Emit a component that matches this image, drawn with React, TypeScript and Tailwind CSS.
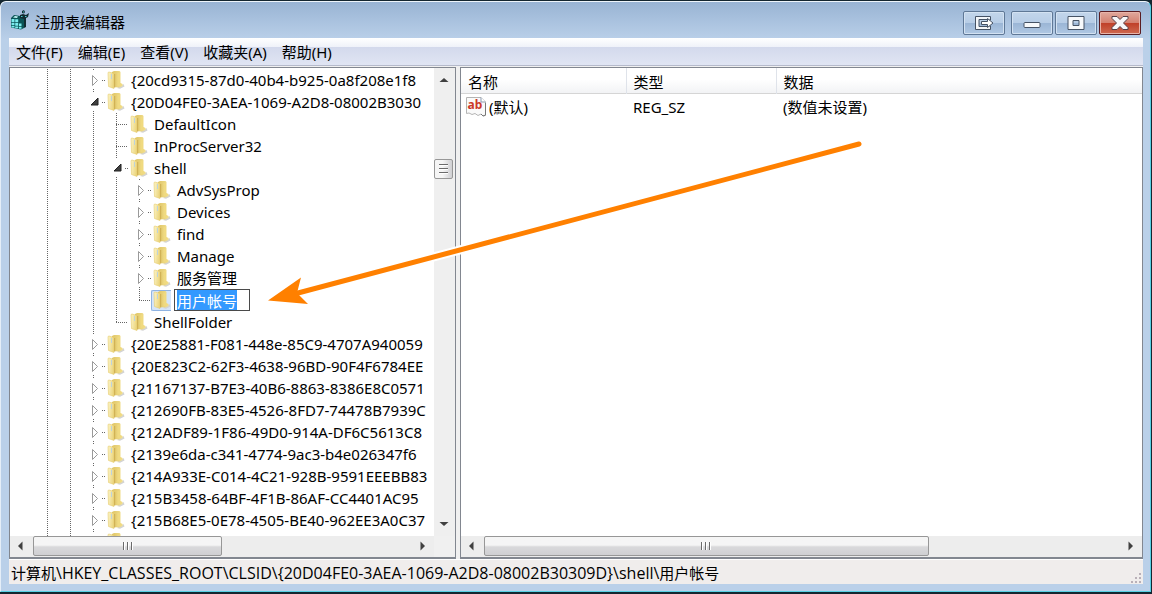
import { useEffect, useRef } from "react";
import type { ReactNode } from "react";

type Toggle = "open" | "closed" | "leaf";

interface TreeItem {
  label: string;
  depth: number;
  toggle: Toggle;
  last?: boolean;
  editing?: boolean;
}

const items: TreeItem[] = [
  { label: "{20cd9315-87d0-40b4-b925-0a8f208e1f8", depth: 2, toggle: "closed" },
  { label: "{20D04FE0-3AEA-1069-A2D8-08002B3030", depth: 2, toggle: "open" },
  { label: "DefaultIcon", depth: 3, toggle: "leaf" },
  { label: "InProcServer32", depth: 3, toggle: "leaf" },
  { label: "shell", depth: 3, toggle: "open" },
  { label: "AdvSysProp", depth: 4, toggle: "closed" },
  { label: "Devices", depth: 4, toggle: "closed" },
  { label: "find", depth: 4, toggle: "closed" },
  { label: "Manage", depth: 4, toggle: "closed" },
  { label: "服务管理", depth: 4, toggle: "closed" },
  { label: "用户帐号", depth: 4, toggle: "leaf", last: true, editing: true },
  { label: "ShellFolder", depth: 3, toggle: "leaf", last: true },
  { label: "{20E25881-F081-448e-85C9-4707A940059", depth: 2, toggle: "closed" },
  { label: "{20E823C2-62F3-4638-96BD-90F4F6784EE", depth: 2, toggle: "closed" },
  { label: "{21167137-B7E3-40B6-8863-8386E8C0571", depth: 2, toggle: "closed" },
  { label: "{212690FB-83E5-4526-8FD7-74478B7939C", depth: 2, toggle: "closed" },
  { label: "{212ADF89-1F86-49D0-914A-DF6C5613C8", depth: 2, toggle: "closed" },
  { label: "{2139e6da-c341-4774-9ac3-b4e026347f6", depth: 2, toggle: "closed" },
  { label: "{214A933E-C014-4C21-928B-9591EEEBB83", depth: 2, toggle: "closed" },
  { label: "{215B3458-64BF-4F1B-86AF-CC4401AC95", depth: 2, toggle: "closed" },
  { label: "{215B68E5-0E78-4505-BE40-962EE3A0C37", depth: 2, toggle: "closed" },
  { label: "", depth: 2, toggle: "closed" },
];

function Guide() {
  return (
    <svg className="h-[22px] w-[23px] shrink-0" viewBox="0 0 23 22" aria-hidden="true">
      <path d="M11.5 0V22" stroke="#666" strokeDasharray="1 1" />
    </svg>
  );
}

function Branch({ toggle, last }: { toggle: Toggle; last?: boolean }) {
  if (toggle === "leaf") {
    return (
      <svg className="h-[22px] w-[23px] shrink-0" viewBox="0 0 23 22" aria-hidden="true">
        <path d={last ? "M11.5 0V11" : "M11.5 0V22"} stroke="#666" strokeDasharray="1 1" />
        <path d="M11 11.5H23" stroke="#666" strokeDasharray="1 1" />
      </svg>
    );
  }
  return (
    <svg className="h-[22px] w-[23px] shrink-0" viewBox="0 0 23 22" aria-hidden="true">
      <path d="M11.5 0V1M11.5 20V21" stroke="#666" />
      <path d="M20 11.5H23" stroke="#666" strokeDasharray="1 1" />
      {toggle === "open" ? (
        <path d="M16 7V14H9Z" fill="#404040" stroke="#222" strokeLinejoin="round" />
      ) : (
        <path d="M10.5 6.5L15.5 11.5L10.5 16.5Z" fill="#fff" stroke="#9a9a9a" strokeLinejoin="round" />
      )}
    </svg>
  );
}

function Folder() {
  return (
    <svg className="h-[20px] w-[18px] shrink-0" viewBox="0 0 18 20" aria-hidden="true">
      <defs>
        <linearGradient id="folderFront" x1="0" x2="1" y1="0" y2="0.3">
          <stop offset="0" stopColor="#fcf5c8" />
          <stop offset="1" stopColor="#ecd680" />
        </linearGradient>
        <linearGradient id="folderBack" x1="0" x2="1" y1="0" y2="0">
          <stop offset="0" stopColor="#dfc566" />
          <stop offset="1" stopColor="#f3e08f" />
        </linearGradient>
      </defs>
      <path d="M10 18L16.5 14L17.5 16.5L13 18.8Z" fill="#d3d3d3" />
      <path d="M5 2L7 1H12.5L13.5 2V13L15.5 14V16L12 17.5L5 17Z" fill="url(#folderBack)" />
      <path d="M10.5 3H13V13L15 14.5L10.5 16.5Z" fill="#f0da80" />
      <path d="M1 2.5L2 2L7 3.5V18.5L1.5 16.5Z" fill="url(#folderFront)" stroke="#e6cb6c" strokeWidth=".6" />
      <path d="M7.7 4V17.5" stroke="#c9a94c" strokeWidth=".9" />
      <path d="M4.5 4V9" stroke="#bdd3dc" strokeWidth="1" />
    </svg>
  );
}

function NameEditor({ value }: { value: string }) {
  const ref = useRef<HTMLInputElement>(null);
  useEffect(() => {
    ref.current?.focus({ preventScroll: true });
    ref.current?.select();
  }, []);
  return (
    <input
      ref={ref}
      aria-label="名称"
      defaultValue={value}
      className="ml-[3px] h-[22px] w-[76px] border border-[#4a4a4a] bg-white px-0.5 text-[15px] leading-5 text-black outline-none selection:bg-[#3399ff] selection:text-white"
    />
  );
}

function TreeRow({ item }: { item: TreeItem }) {
  return (
    <li role="treeitem" aria-level={item.depth + 1} className="flex h-[22px] items-center whitespace-nowrap">
      {Array.from({ length: item.depth }, (_, i) => (
        <Guide key={i} />
      ))}
      <Branch toggle={item.toggle} last={item.last} />
      {item.editing ? (
        <>
          <span className="flex h-[21px] w-5 shrink-0 items-center rounded-l-[2px] border border-r-0 border-[#8fb3e2] bg-[#d5e5f9] pl-px">
            <Folder />
          </span>
          <NameEditor value={item.label} />
        </>
      ) : (
        <>
          <span className="ml-0.5 flex">
            <Folder />
          </span>
          <span className="ml-1.5">{item.label}</span>
        </>
      )}
    </li>
  );
}

function ArrowButton({ label, d, className }: { label: string; d: string; className: string }) {
  return (
    <button type="button" aria-label={label} className={`flex shrink-0 items-center justify-center ${className}`}>
      <svg className="size-[10px]" viewBox="0 0 10 10" aria-hidden="true">
        <path d={d} fill="#404040" />
      </svg>
    </button>
  );
}

function HorizontalScroll({ thumb, label }: { thumb: string; label: string }) {
  return (
    <div aria-label={label} className="flex h-[21px] min-w-0 flex-1 items-start bg-[#ededed]">
      <ArrowButton label="向左滚动" d="M6.5 0.5V9.5L2 5Z" className="h-5 w-[23px] pr-0.5" />
      <div className="flex min-w-0 flex-1">
        <div className={`flex h-5 items-center justify-center gap-0.5 rounded-[2px] border border-[#979797] bg-linear-to-b from-[#f5f5f5] from-45% via-[#d9d9db] via-55% to-[#cfcfd2] ${thumb}`}>
          <i className="h-2 w-0.5 border-r border-white bg-[#6b6b6b]" />
          <i className="h-2 w-0.5 border-r border-white bg-[#6b6b6b]" />
          <i className="h-2 w-0.5 border-r border-white bg-[#6b6b6b]" />
        </div>
      </div>
      <ArrowButton label="向右滚动" d="M2.5 0.5V9.5L7 5Z" className="h-5 w-[23px]" />
    </div>
  );
}

function VerticalScroll() {
  return (
    <div className="flex w-[21px] shrink-0 flex-col items-center bg-[#efefef] pr-0.5">
      <ArrowButton label="向上滚动" d="M0.5 7H9.5L5 3Z" className="h-6 w-full" />
      <div className="flex flex-1 flex-col items-center pt-[67px]">
        <div className="flex h-5 w-[19px] flex-col items-center justify-center gap-0.5 rounded-[2px] border border-[#979797] bg-linear-to-r from-[#f5f5f5] from-45% to-[#cfcfd2]">
          <i className="h-0.5 w-[9px] border-b border-white bg-[#6b6b6b]" />
          <i className="h-0.5 w-[9px] border-b border-white bg-[#6b6b6b]" />
          <i className="h-0.5 w-[9px] border-b border-white bg-[#6b6b6b]" />
        </div>
      </div>
      <ArrowButton label="向下滚动" d="M0.5 3H9.5L5 7Z" className="h-6 w-full" />
    </div>
  );
}

function CaptionButton({ label, danger, children }: { label: string; danger?: boolean; children: ReactNode }) {
  const tone = danger
    ? "border-[#5a1d22] [background-image:linear-gradient(#e0a99d,#d4806f_50%,#bf3f28_50%,#cf6a50)] shadow-[inset_0_0_0_1px_#e8b4a9]"
    : "border-[#5f7896] [background-image:linear-gradient(#c3d6eb,#b7cde6_50%,#9ab5d5_50%,#b0c8e3)] shadow-[inset_0_0_0_1px_#d3e2f2]";
  return (
    <button
      type="button"
      aria-label={label}
      className={`flex h-6 w-[42px] items-center justify-center rounded-[2px] border ${tone}`}
    >
      {children}
    </button>
  );
}

function RegistryIcon() {
  return (
    <svg className="h-5 w-5 shrink-0" viewBox="0 0 20 20" aria-hidden="true">
      <path d="M1 8L4 5L10 6L14 8V18L11 19.5L1 17.5Z" fill="#0a5557" />
      <path d="M1.5 9H4.5V12H1.5ZM5.2 9.3H8.2V12.3H5.2ZM1.5 12.7H4.5V15.2H1.5ZM5.2 13H8.2V15.8H5.2ZM9 13.5H11.5V16H9ZM1.5 16H4.5V17.5H1.5ZM5.2 16.5H8.2V18.2H5.2ZM9 16.8H11.5V18.7H9Z" fill="#7cecee" />
      <path d="M3 7.5L5 6L8 6.5L7 8Z" fill="#c8fafa" />
      <path d="M12 1L14 0L15 2L14 3.5L12 3ZM10 5L13 4L16 5L19 3L18 7L16 8V17L14 18V9L10 8Z" fill="#102c30" />
      <path d="M13 1.5H14V2.5H13ZM11 6H12.5V7H11ZM15 6H16.5V7H15Z" fill="#48c8cc" />
    </svg>
  );
}

function StringValueIcon() {
  return (
    <svg className="h-5 w-5 shrink-0" viewBox="0 0 20 20" aria-hidden="true">
      <path d="M.5 .5H15L19.5 5V18.5L17 19L15 17L12 18.5L9 16.5L6 17.5L3 16L.5 16.5Z" fill="#fafafa" stroke="#b4b4b4" />
      <path d="M15 .5V5H19.5" fill="#fff" stroke="#8b9bb0" />
      <path d="M19.5 6V18L17 19L15 17" fill="none" stroke="#777" />
      <text x="1.5" y="12" fontSize="12" fontWeight="700" fontFamily="Noto Sans, sans-serif" fill="#cc3a28">ab</text>
    </svg>
  );
}

const menus = ["文件(F)", "编辑(E)", "查看(V)", "收藏夹(A)", "帮助(H)"];

export default function App() {
  return (
    <div className="h-screen bg-[#142630] pt-px pr-px pb-0.5 font-['Noto_Sans','Noto_Sans_CJK_SC',sans-serif] text-[15px] leading-[22px] text-black select-none">
      <div className="relative flex h-full flex-col rounded-t-md border border-t-[#eef5fb] border-r-[#57cfe3] border-b-[#57cfe3] border-l-[#e5eef8] bg-[#bad0e9] bg-linear-to-b from-[#99b4d4] from-0% to-[#bad0e9] to-[38px]">
        <header className="flex h-9 shrink-0 items-center pr-[9px] pl-[9px]">
          <RegistryIcon />
          <h1 className="ml-[5px] flex-1 pt-1">注册表编辑器</h1>
          <div className="flex pt-1.5 pb-px">
            <CaptionButton label="移动到其他显示器">
              <svg className="h-4 w-5" viewBox="0 0 20 16" aria-hidden="true">
                <path d="M1.5 1.5H16.5V5H13V4.5H5V11.5H13V11H16.5V14.5H1.5Z" fill="#f4f7fa" stroke="#465365" />
                <path d="M7.5 6.5H13.5V3.5L19 8L13.5 12.5V9.5H7.5Z" fill="#fff" stroke="#465365" />
              </svg>
            </CaptionButton>
            <div className="ml-1.5 flex gap-0.5">
              <CaptionButton label="最小化">
                <svg className="h-4 w-5" viewBox="0 0 20 16" aria-hidden="true">
                  <rect x="2" y="7.5" width="16" height="5" rx="1" fill="#f7f9fb" stroke="#465365" />
                </svg>
              </CaptionButton>
              <CaptionButton label="最大化">
                <svg className="h-4 w-5" viewBox="0 0 20 16" aria-hidden="true">
                  <path d="M2 1.5H18V14.5H2ZM7 5.5V10.5H13V5.5Z" fill="#f7f9fb" fillRule="evenodd" stroke="#465365" />
                </svg>
              </CaptionButton>
              <CaptionButton label="关闭" danger>
                <svg className="h-4 w-5" viewBox="0 0 20 16" aria-hidden="true">
                  <path d="M2 1.5H7L10 4.5L13 1.5H18V3.5L13.5 8L18 12.5V14.5H13L10 11.5L7 14.5H2V12.5L6.5 8L2 3.5Z" fill="#f7f8fa" stroke="#564048" strokeLinejoin="round" />
                </svg>
              </CaptionButton>
            </div>
          </div>
        </header>

        <div className="mr-[7px] mb-[7px] ml-2 flex min-h-0 flex-1 flex-col bg-[#f0f0f0]">
          <nav className="flex h-7 shrink-0 items-center gap-[15px] border-b border-[#b5bacb] pl-[7px] [background-image:linear-gradient(#fff,#eff2f9_9px,#d3d9ec_9px,#e0e5f3)]">
            {menus.map((menu) => (
              <button key={menu} type="button">
                {menu}
              </button>
            ))}
          </nav>

          <main className="flex min-h-0 flex-1 pt-px">
            <section className="flex w-[447px] shrink-0 flex-col border border-b-2 border-[#828790] bg-white">
              <div className="flex min-h-0 flex-1">
                <ul role="tree" aria-label="注册表项" className="min-w-0 flex-1 overflow-hidden pt-px pl-[26px]">
                  {items.map((item, i) => (
                    <TreeRow key={i} item={item} />
                  ))}
                </ul>
                <VerticalScroll />
              </div>
              <div className="flex bg-[#f0f0f0]">
                <HorizontalScroll label="注册表项滚动条" thumb="w-1/2" />
                <div className="w-[21px] shrink-0" />
              </div>
            </section>

            <section className="ml-1 flex min-w-0 flex-1 flex-col border border-b-2 border-[#828790] bg-white">
              <div className="min-h-0 flex-1 overflow-hidden">
                <table className="w-full table-fixed border-collapse text-left">
                  <thead>
                    <tr className="h-[25px] border-b border-[#d5d5d5] bg-linear-to-b from-white from-45% to-[#f2f3f5]">
                      <th className="w-[165px] border-r border-[#dfe3ea] pt-[3px] pl-[7px] font-normal">名称</th>
                      <th className="w-[150px] border-r border-[#dfe3ea] pt-[3px] pl-[7px] font-normal">类型</th>
                      <th className="pt-[3px] pl-[7px] font-normal">数据</th>
                    </tr>
                  </thead>
                  <tbody>
                    <tr className="h-[26px]">
                      <td className="pl-[5px]">
                        <span className="flex items-center gap-[3px]">
                          <StringValueIcon />
                          (默认)
                        </span>
                      </td>
                      <td className="pl-[7px]">REG_SZ</td>
                      <td className="pl-[7px]">(数值未设置)</td>
                    </tr>
                  </tbody>
                </table>
              </div>
              <div className="flex">
                <HorizontalScroll label="值滚动条" thumb="w-[70%]" />
              </div>
            </section>
          </main>

          <footer className="flex h-[25px] shrink-0 items-start justify-between border-t border-white bg-[#f0edec] pt-0.5 pl-0.5">
            <p className="whitespace-nowrap">
              计算机
              <span className="font-['Open_Sans','Noto_Sans',sans-serif] text-base leading-[22px]">
                {"\\HKEY_CLASSES_ROOT\\CLSID\\{20D04FE0-3AEA-1069-A2D8-08002B30309D}\\shell\\"}
              </span>
              用户帐号
            </p>
            <svg className="mr-px size-3 self-end" viewBox="0 0 12 12" aria-hidden="true">
              <path d="M9 1h2v2h-2zM5 5h2v2h-2zM9 5h2v2h-2zM1 9h2v2h-2zM5 9h2v2h-2zM9 9h2v2h-2z" fill="#b9b0b8" />
            </svg>
          </footer>
        </div>
      </div>

      <svg className="pointer-events-none absolute top-[136px] left-[262px] h-[176px] w-[606px]" viewBox="262 136 606 176" aria-hidden="true">
        <path d="M859 144L298 293" stroke="#fff" strokeWidth="9" strokeLinecap="round" />
        <path d="M859 144L298 293" stroke="#ff8000" strokeWidth="5" strokeLinecap="round" />
        <path d="M268 300.5L301 277.5L297 293L308 304Z" fill="#ff8000" />
      </svg>
    </div>
  );
}
